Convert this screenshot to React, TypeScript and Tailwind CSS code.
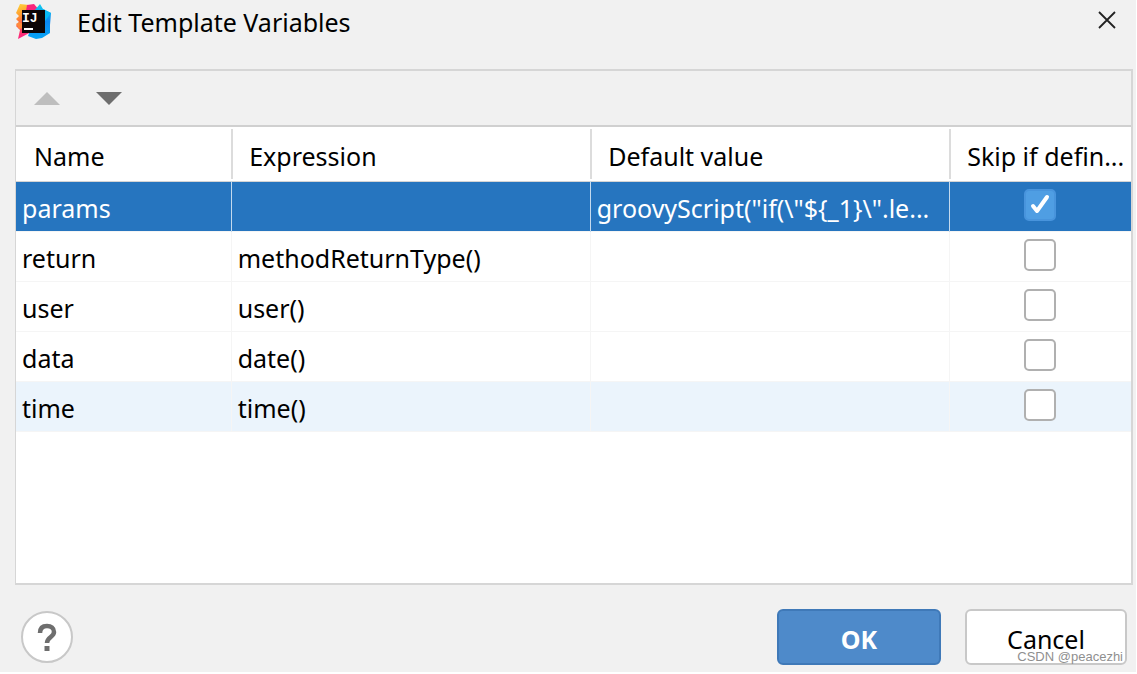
import { ReactNode, useState } from 'react';

type Variable = {
	name: string;
	expression: string;
	defaultValue: string;
	skip: boolean;
};

const VARIABLES: Variable[] = [
	{
		name: 'params',
		expression: '',
		defaultValue: 'groovyScript("if(\\"${_1}\\".le...',
		skip: true,
	},
	{
		name: 'return',
		expression: 'methodReturnType()',
		defaultValue: '',
		skip: false,
	},
	{ name: 'user', expression: 'user()', defaultValue: '', skip: false },
	{ name: 'data', expression: 'date()', defaultValue: '', skip: false },
	{ name: 'time', expression: 'time()', defaultValue: '', skip: false },
];

const COLUMNS = ['Name', 'Expression', 'Default value', 'Skip if defin...'];

const Logo = () => (
	<svg className="size-9" viewBox="0 0 36 36" aria-hidden="true">
		<defs>
			<linearGradient id="warm" x1="0" y1="0" x2="0.2" y2="1">
				<stop offset="0" stopColor="#ffd83b" />
				<stop offset="0.35" stopColor="#ff9a2e" />
				<stop offset="0.6" stopColor="#fb5a45" />
				<stop offset="1" stopColor="#fb1f86" />
			</linearGradient>
			<linearGradient id="cool" x1="0.5" y1="0" x2="0.5" y2="1">
				<stop offset="0" stopColor="#12cdee" />
				<stop offset="0.5" stopColor="#0a86f2" />
				<stop offset="1" stopColor="#08a5f5" />
			</linearGradient>
		</defs>
		<path d="M5 0l9 1 4 6v20L3 35l2-9-4-4 3-4-3-3 3-3-3-3z" fill="url(#warm)" />
		<path d="M12 1l7-1 6 7-8 3-6-3z" fill="#f9257a" />
		<path d="M25 0l3 5 8 4-1 12v8l-8 5-6 1-8-3 3-8 3-17z" fill="url(#cool)" />
		<path d="M1 20l3-2 4 2v4l-4 1z" fill="#ff8a3c" />
		<path d="M28 5l8 4-6 8z" fill="#08b9f6" />
		<rect x="7" y="6" width="23" height="23" fill="#0b0507" />
		<text
			x="7"
			y="18"
			fill="#fff"
			fontSize="13"
			fontWeight="bold"
			fontFamily="'Liberation Mono', monospace">
			IJ
		</text>
		<rect x="9" y="24" width="9" height="2" fill="#fff" />
	</svg>
);

const ToolButton = ({
	label,
	disabled = false,
	children,
}: {
	label: string;
	disabled?: boolean;
	children: ReactNode;
}) => (
	<button
		type="button"
		aria-label={label}
		disabled={disabled}
		className="flex h-8 w-[62px] items-center justify-center">
		<svg className="h-[13px] w-[26px]" viewBox="0 0 26 13">
			{children}
		</svg>
	</button>
);

const SkipCheckbox = ({ name, defaultChecked }) => (
	<label className="relative mx-auto mb-[2px] block size-8">
		<input
			type="checkbox"
			aria-label={`Skip ${name} if defined`}
			defaultChecked={defaultChecked}
			className="peer block size-8 appearance-none rounded-[5px] border-2 border-[#b0b0b0] bg-white checked:border-[#4894dc] checked:bg-[#4f9ee3]"
		/>
		<svg
			className="pointer-events-none absolute inset-0 hidden peer-checked:block"
			viewBox="0 0 32 32"
			fill="none"
			stroke="#fff"
			strokeWidth="4"
			strokeLinecap="round"
			strokeLinejoin="round">
			<path d="M9 17l4 5L23 8" />
		</svg>
	</label>
);

const VariablesTable = () => {
	const [selected, setSelected] = useState(0);

	return (
		<table className="w-full table-fixed border-collapse text-left">
			<colgroup>
				<col className="w-[19.3%]" />
				<col className="w-[32.2%]" />
				<col className="w-[32.2%]" />
				<col />
			</colgroup>
			<thead>
				<tr className="border-b border-[#d4d4d4]">
					{COLUMNS.map((column, index) => (
						<th key={column} scope="col" className="h-[54px] p-0 font-normal">
							<div
								className={`h-[50px] truncate leading-[54px] ${
									index === 0
										? 'pl-[18px]'
										: 'border-l-2 border-[#dcdcdc] pl-4'
								}`}>
								{column}
							</div>
						</th>
					))}
				</tr>
			</thead>
			<tbody>
				{VARIABLES.map((variable, index) => {
					const isSelected = index === selected;
					const cell = isSelected ? 'border-[#c4daee]' : 'border-[#f5f5f5]';
					const textCell = `truncate px-1.5 pt-1 pb-0 ${cell}`;
					return (
						<tr
							key={variable.name}
							onClick={() => setSelected(index)}
							className={`h-[50px] border-b border-[#f5f5f5] ${
								isSelected
									? 'bg-[#2675bf] text-white'
									: index === 4
										? 'bg-[#ebf4fc]'
										: 'bg-white'
							}`}>
							<td className={textCell}>{variable.name}</td>
							<td className={`border-l ${textCell}`}>{variable.expression}</td>
							<td className={`border-l ${textCell}`}>
								{variable.defaultValue}
							</td>
							<td className={`border-l p-0 ${cell}`}>
								<SkipCheckbox
									name={variable.name}
									defaultChecked={variable.skip}
								/>
							</td>
						</tr>
					);
				})}
			</tbody>
		</table>
	);
};

export default function App() {
	return (
		<div className="flex min-h-screen flex-col bg-white pr-px pb-[2px] font-['Noto_Sans',sans-serif] text-[25px] leading-9 text-black">
			<main className="relative flex flex-1 flex-col bg-[#f1f1f1]">
				<header className="flex h-[69px] items-start pt-1 pr-[19px] pl-[15px]">
					<Logo />
					<h1 className="ml-[26px] flex-1">Edit Template Variables</h1>
					<button type="button" aria-label="Close" className="mt-[6px]">
						<svg
							className="size-5"
							viewBox="0 0 20 20"
							stroke="#222"
							strokeWidth="1.8">
							<path d="M2 2l16 16M18 2L2 18" />
						</svg>
					</button>
				</header>

				<section className="mr-[3px] ml-[15px] flex flex-1 flex-col border-2 border-l border-[#d6d6d6] bg-white">
					<div className="flex h-[56px] items-center border-b-2 border-[#d0d0d0] bg-[#f1f1f1]">
						<ToolButton label="Move up" disabled>
							<path d="M13 0l13 13H0z" fill="#bebebe" />
						</ToolButton>
						<ToolButton label="Move down">
							<path d="M0 0h26L13 13z" fill="#6e6e6e" />
						</ToolButton>
					</div>
					<VariablesTable />
				</section>

				<footer className="flex items-center pt-6 pr-[9px] pb-[7px] pl-[21px]">
					<button
						type="button"
						aria-label="Help"
						className="size-[52px] rounded-full border-2 border-[#c8c8c8] bg-white text-[#6e6e6e]">
						<svg
							className="mx-auto h-7 w-5"
							viewBox="0 0 20 28"
							fill="none"
							stroke="currentColor"
							strokeWidth="4.5">
							<path d="M3 10C3 5 6 3 10 3s7 2 7 6c0 5-7 5-7 11" />
							<path d="M10 23v5" strokeWidth="5" />
						</svg>
					</button>
					<div className="ml-auto flex gap-6">
						<button
							type="button"
							className="h-14 w-[164px] rounded-md border-2 border-[#3f79b8] bg-[#4e8aca] pt-1 font-bold text-white">
							OK
						</button>
						<button
							type="button"
							className="h-14 w-[162px] rounded-md border-2 border-[#c8c8c8] bg-white pt-1">
							Cancel
						</button>
					</div>
				</footer>
				<span className="pointer-events-none absolute right-[13px] bottom-[5px] font-['Liberation_Sans',sans-serif] text-[13px] leading-5 text-[#8f8f8f]">
					CSDN @peacezhi
				</span>
			</main>
		</div>
	);
}
